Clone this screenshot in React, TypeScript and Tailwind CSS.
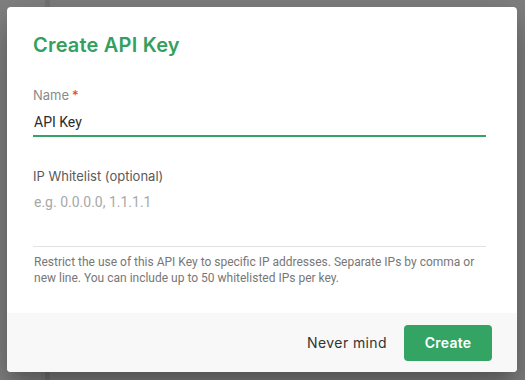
import React from 'react';

const heading = { fontFamily: 'Inter, "Noto Sans", sans-serif' };
const body = { fontFamily: 'Roboto, "Liberation Sans", sans-serif' };

function Field({ label, required, children }: { label: string; required?: boolean; children: React.ReactNode }) {
  return (
    <div className="flex flex-col">
      <label className="text-[13px] leading-5 text-[#8a8a8a]" style={heading}>
        {label}
        {required && <span className="ml-[3px] text-[#e53935]">*</span>}
      </label>
      {children}
    </div>
  );
}

export default function App() {
  return (
    <div className="relative h-[380px] w-[525px] overflow-hidden bg-[#808080]">
      <div className="flex h-full">
        <div className="w-[45px] bg-[#828282]" />
        <div className="w-[5px] bg-[#767676]" />
        <div className="flex-1" />
      </div>

      <div className="absolute left-[7px] top-[7px] flex h-[365px] w-[510px] flex-col overflow-hidden rounded-[4px] bg-white shadow-[0_11px_15px_-7px_rgba(0,0,0,0.2),0_24px_38px_3px_rgba(0,0,0,0.14),0_9px_46px_8px_rgba(0,0,0,0.12)]">
        <div className="flex flex-1 flex-col pl-[26px] pr-[31px] pt-[24px]">
          <h2 className="text-[20px] font-semibold leading-7 tracking-[0.2px] text-[#33a061]" style={heading}>
            Create API Key
          </h2>

          <div className="mt-[26px]">
            <Field label="Name" required>
              <div className="mt-[7px] border-b-2 border-[#36a265] pb-[3px] pl-px text-[14px] leading-5 text-[#2b2b2b]" style={body}>
                API Key
              </div>
            </Field>
          </div>

          <div className="mt-[26px]">
            <label className="text-[13px] leading-5 text-[#5a5a5a]" style={heading}>
              IP Whitelist (optional)
            </label>
            <div className="mt-[5px] h-[55px] border-b border-[#e2e2e2] pl-px text-[14px] leading-5 text-[#a8a8a8]" style={body}>
              e.g. 0.0.0.0, 1.1.1.1
            </div>
            <p className="mt-[7px] pl-px text-[12px] leading-4 text-[#777]" style={body}>
              Restrict the use of this API Key to specific IP addresses. Separate IPs by comma or new line. You can include up to 50 whitelisted IPs per key.
            </p>
          </div>
        </div>

        <div className="flex h-[59px] items-center justify-end gap-[17px] bg-[#f8f8f8] pr-[25px]">
          <button className="text-[14px] font-normal tracking-[0.4px] text-[#333]" style={heading}>
            Never mind
          </button>
          <button
            className="h-[36px] w-[88px] rounded-[4px] bg-[#33a464] text-[14px] font-semibold tracking-[0.2px] text-white"
            style={heading}
          >
            Create
          </button>
        </div>
      </div>
    </div>
  );
}
